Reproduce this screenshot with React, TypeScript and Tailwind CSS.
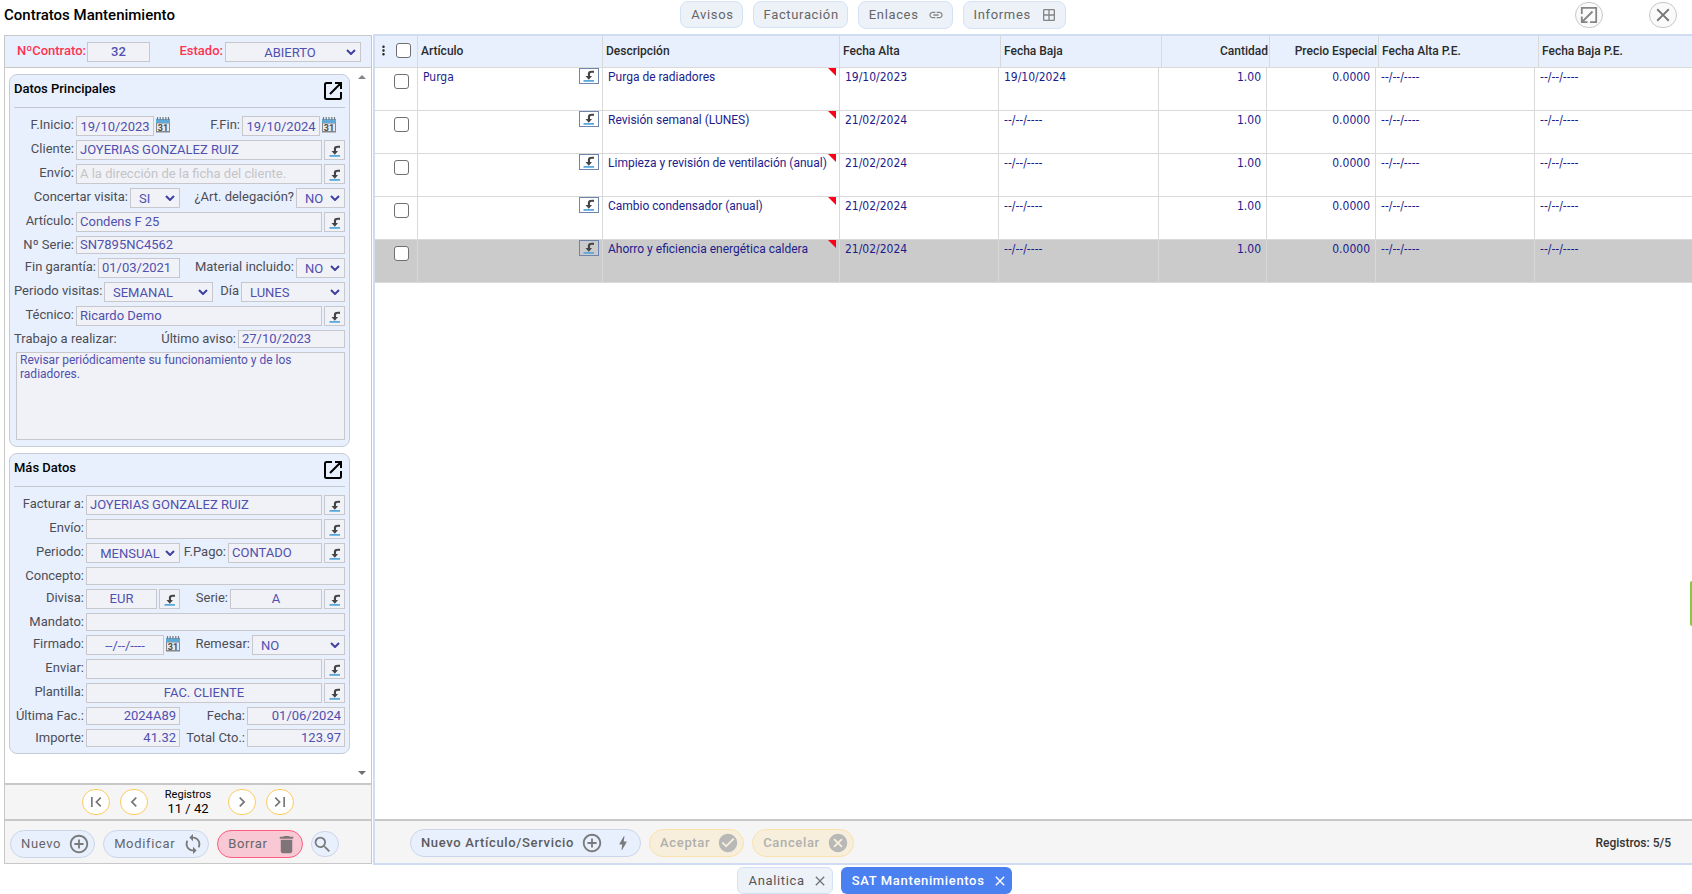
import { useState } from "react";
import type { ReactNode } from "react";
import {
  MdAddCircleOutline,
  MdBolt,
  MdCancel,
  MdCheckCircle,
  MdChevronLeft,
  MdChevronRight,
  MdClose,
  MdDelete,
  MdFirstPage,
  MdLastPage,
  MdLink,
  MdLoop,
  MdMoreVert,
  MdOutlineWindow,
  MdSearch,
} from "react-icons/md";

type Align = "left" | "center" | "right";

const alignClass: Record<Align, string> = {
  left: "text-left",
  center: "text-center",
  right: "text-right",
};

type LabelProps = {
  htmlFor: string;
  children: ReactNode;
  className?: string;
};

const Label = ({ htmlFor, children, className = "ml-auto" }: LabelProps) => (
  <label
    htmlFor={htmlFor}
    className={`${className} shrink-0 whitespace-nowrap text-right leading-[18px] text-[#4d4d55]`}
  >
    {children}
  </label>
);

type FieldProps = {
  id: string;
  value?: string;
  placeholder?: string;
  align?: Align;
  className?: string;
};

const Field = ({
  id,
  value = "",
  placeholder,
  align = "left",
  className = "h-5 flex-1 pb-[2px]",
}: FieldProps) => (
  <input
    id={id}
    type="text"
    defaultValue={value}
    placeholder={placeholder}
    className={`${className} ${alignClass[align]} min-w-0 border border-[#c8c8cc] bg-[#f1f2f7] px-[3px] text-[#5050b0] outline-none placeholder:text-[#c4c4c8]`}
  />
);

type SelectProps = {
  id: string;
  value: string;
  className: string;
  centered?: boolean;
};

const Select = ({ id, value, className, centered = false }: SelectProps) => (
  <span className={`relative flex h-5 shrink-0 ${className}`}>
    <select
      id={id}
      defaultValue={value}
      className={`h-5 w-full appearance-none border border-[#c8c8cc] bg-[#f1f2f7] text-[#5050b0] outline-none ${
        centered ? "pl-2 pr-[14px] [text-align-last:center]" : "pl-2"
      }`}
    >
      <option>{value}</option>
    </select>
    <svg
      viewBox="0 0 10 6"
      className="pointer-events-none absolute right-[5px] top-[7px] h-[6px] w-[10px]"
    >
      <path d="M1 1l4 4 4-4" fill="none" stroke="#4040a0" strokeWidth="2" />
    </svg>
  </span>
);

const LookupIcon = () => (
  <svg viewBox="0 0 12 12" className="h-3 w-3">
    <path d="M0.5 10h10.500v1.800H0.5z" fill="#5aa9dc" />
    <path
      d="M11 .8C7.500.4 5 .9 4.900 3.400V6H2.500L5.800 9.800 9 6H7V4C7.100 3 8.500 2.600 11 2.900z"
      fill="#444"
    />
  </svg>
);

const LookupButton = ({ label }: { label: string }) => (
  <button
    aria-label={label}
    className="flex h-5 w-[21px] shrink-0 items-end justify-center border border-[#c8c8cc] bg-[#f1f2f7] pb-[2px]"
  >
    <LookupIcon />
  </button>
);

const CalendarButton = ({ label }: { label: string }) => (
  <button aria-label={label} className="flex h-5 w-[14px] shrink-0 items-start">
    <svg viewBox="0 0 14 17" className="h-[17px] w-[14px]">
      <path d="M0 4h14v12.500H0z" fill="#85888b" />
      <path d="M0 3h14v4H0z" fill="#5fa9d6" />
      <path d="M1 7.500h12v7.500H1z" fill="#e8e8ea" />
      <path
        d="M1.500 1v3M4.200 1v3M7 1v3M9.800 1v3M12.500 1v3"
        stroke="#75797d"
        strokeWidth="1.200"
      />
      <text x="7" y="14.500" textAnchor="middle" fontSize="9" fontWeight="700" fill="#4c4f52">
        31
      </text>
    </svg>
  </button>
);

const ExpandIcon = () => (
  <svg viewBox="0 0 18 18" className="h-[18px] w-[18px]">
    <path
      d="M8 1H2.500A1.500 1.500 0 0 0 1 2.500v13A1.500 1.500 0 0 0 2.500 17h13a1.500 1.500 0 0 0 1.500-1.500V10M11 1h6v6M17 1L6 12"
      fill="none"
      stroke="#000"
      strokeWidth="2"
    />
  </svg>
);

const ShrinkIcon = () => (
  <svg viewBox="0 0 18 18" className="h-[18px] w-[18px]">
    <path
      d="M1.800 8V1.800h14.400v14.400H10M1.800 10.500v5.700h5.700M2 16L12.500 5.500"
      fill="none"
      stroke="#858585"
      strokeWidth="1.800"
    />
  </svg>
);

const Row = ({ children }: { children: ReactNode }) => (
  <div className="flex items-start gap-[2px]">{children}</div>
);

type CardProps = {
  title: string;
  children: ReactNode;
};

const Card = ({ title, children }: CardProps) => (
  <section className="rounded-lg border border-[#c6cbd6] bg-[#e8f0fe] px-1 pb-[6px]">
    <header className="flex h-[33px] items-start justify-between border-b border-[#c4c8d0] pr-[3px] pt-[7px]">
      <h2 className="text-[13px] font-medium leading-[14px] text-black">{title}</h2>
      <button aria-label={`Ampliar ${title}`}>
        <ExpandIcon />
      </button>
    </header>
    <div className="flex flex-col gap-1 pt-2">{children}</div>
  </section>
);

const MainData = () => (
  <Card title="Datos Principales">
    <Row>
      <Label htmlFor="inicio" className="w-[60px]">F.Inicio:</Label>
      <Field id="inicio" value="19/10/2023" align="center" className="h-5 w-[78px]" />
      <CalendarButton label="Elegir fecha de inicio" />
      <Label htmlFor="fin">F.Fin:</Label>
      <Field id="fin" value="19/10/2024" align="center" className="h-5 w-[78px]" />
      <CalendarButton label="Elegir fecha de fin" />
      <span className="w-[7px]" />
    </Row>
    <Row>
      <Label htmlFor="cliente" className="w-[60px]">Cliente:</Label>
      <Field id="cliente" value="JOYERIAS GONZALEZ RUIZ" />
      <LookupButton label="Buscar cliente" />
    </Row>
    <Row>
      <Label htmlFor="envio" className="w-[60px]">Envío:</Label>
      <Field id="envio" placeholder="A la dirección de la ficha del cliente." />
      <LookupButton label="Buscar envío" />
    </Row>
    <Row>
      <Label htmlFor="concertar" className="w-[114px]">Concertar visita:</Label>
      <Select id="concertar" value="SI" className="w-[50px]" />
      <Label htmlFor="delegacion">¿Art. delegación?</Label>
      <Select id="delegacion" value="NO" className="w-[49px]" />
    </Row>
    <Row>
      <Label htmlFor="articulo" className="w-[60px]">Artículo:</Label>
      <Field id="articulo" value="Condens F 25" />
      <LookupButton label="Buscar artículo" />
    </Row>
    <Row>
      <Label htmlFor="serie" className="w-[60px]">Nº Serie:</Label>
      <Field id="serie" value="SN7895NC4562" className="h-[18px] flex-1" />
    </Row>
    <Row>
      <Label htmlFor="garantia" className="w-[82px]">Fin garantía:</Label>
      <Field id="garantia" value="01/03/2021" className="h-5 w-[82px] pb-[2px]" />
      <Label htmlFor="material">Material incluido:</Label>
      <Select id="material" value="NO" className="w-[49px]" />
    </Row>
    <Row>
      <Label htmlFor="periodo" className="w-[88px]">Periodo visitas:</Label>
      <Select id="periodo" value="SEMANAL" className="w-[109px]" />
      <Label htmlFor="dia">Día</Label>
      <Select id="dia" value="LUNES" className="w-[104px]" />
    </Row>
    <Row>
      <Label htmlFor="tecnico" className="w-[60px]">Técnico:</Label>
      <Field id="tecnico" value="Ricardo Demo" />
      <LookupButton label="Buscar técnico" />
    </Row>
    <Row>
      <Label htmlFor="trabajo" className="">Trabajo a realizar:</Label>
      <Label htmlFor="aviso">Último aviso:</Label>
      <Field id="aviso" value="27/10/2023" className="h-[18px] w-[107px]" />
    </Row>
    <textarea
      id="trabajo"
      defaultValue="Revisar periódicamente su funcionamiento y de los radiadores."
      className="ml-[2px] h-[88px] resize-none border border-[#c8c8cc] bg-[#f1f2f7] px-[3px] text-xs leading-[14px] text-[#5050b0] outline-none"
    />
  </Card>
);

const MoreData = () => (
  <Card title="Más Datos">
    <Row>
      <Label htmlFor="facturar" className="w-[70px]">Facturar a:</Label>
      <Field id="facturar" value="JOYERIAS GONZALEZ RUIZ" />
      <LookupButton label="Buscar cliente a facturar" />
    </Row>
    <Row>
      <Label htmlFor="envioFac" className="w-[70px]">Envío:</Label>
      <Field id="envioFac" />
      <LookupButton label="Buscar envío de factura" />
    </Row>
    <Row>
      <Label htmlFor="periodoFac" className="w-[70px]">Periodo:</Label>
      <Select id="periodoFac" value="MENSUAL" className="w-[94px]" centered />
      <Label htmlFor="pago">F.Pago:</Label>
      <Field id="pago" value="CONTADO" className="h-5 w-[94px] pb-[2px]" />
      <LookupButton label="Buscar forma de pago" />
    </Row>
    <Row>
      <Label htmlFor="concepto" className="w-[70px]">Concepto:</Label>
      <Field id="concepto" className="h-[18px] flex-1" />
    </Row>
    <Row>
      <Label htmlFor="divisa" className="w-[70px]">Divisa:</Label>
      <Field id="divisa" value="EUR" align="center" className="h-5 w-[71px] pb-[2px]" />
      <LookupButton label="Buscar divisa" />
      <Label htmlFor="serieFac">Serie:</Label>
      <Field id="serieFac" value="A" align="center" className="h-5 w-[92px] pb-[2px]" />
      <LookupButton label="Buscar serie" />
    </Row>
    <Row>
      <Label htmlFor="mandato" className="w-[70px]">Mandato:</Label>
      <Field id="mandato" className="h-[18px] flex-1" />
    </Row>
    <Row>
      <Label htmlFor="firmado" className="w-[70px]">Firmado:</Label>
      <Field id="firmado" value="--/--/----" align="center" className="h-5 w-[78px]" />
      <CalendarButton label="Elegir fecha de firma" />
      <Label htmlFor="remesar">Remesar:</Label>
      <Select id="remesar" value="NO" className="w-[93px]" />
    </Row>
    <Row>
      <Label htmlFor="enviar" className="w-[70px]">Enviar:</Label>
      <Field id="enviar" />
      <LookupButton label="Buscar envío de correo" />
    </Row>
    <Row>
      <Label htmlFor="plantilla" className="w-[70px]">Plantilla:</Label>
      <Field id="plantilla" value="FAC. CLIENTE" align="center" />
      <LookupButton label="Buscar plantilla" />
    </Row>
    <Row>
      <Label htmlFor="ultima" className="w-[70px]">Última Fac.:</Label>
      <Field id="ultima" value="2024A89" align="right" className="h-[18px] w-[94px]" />
      <Label htmlFor="fecha">Fecha:</Label>
      <Field id="fecha" value="01/06/2024" align="right" className="h-[18px] w-[98px]" />
    </Row>
    <Row>
      <Label htmlFor="importe" className="w-[70px]">Importe:</Label>
      <Field id="importe" value="41.32" align="right" className="h-[18px] w-[94px]" />
      <Label htmlFor="total">Total Cto.:</Label>
      <Field id="total" value="123.97" align="right" className="h-[18px] w-[98px]" />
    </Row>
  </Card>
);

type PagerButtonProps = {
  label: string;
  children: ReactNode;
};

const PagerButton = ({ label, children }: PagerButtonProps) => (
  <button
    aria-label={label}
    className="flex h-[26px] w-7 items-center justify-center rounded-full border border-[#fccb60] bg-white text-[20px] text-[#757575]"
  >
    {children}
  </button>
);

const pill =
  "flex h-7 items-center gap-[7px] rounded-full border pl-[10px] text-[13px] tracking-wider";

const Sidebar = () => (
  <aside className="flex w-[368px] shrink-0 flex-col border border-[#c8c8c8] text-[13px]">
    <div className="flex h-8 shrink-0 items-start border-b border-[#c8c8c8] bg-[#e8f0fe] pl-3 pr-[10px] pt-[6px]">
      <label htmlFor="contrato" className="font-medium leading-[18px] text-[#ff3350]">
        NºContrato:
      </label>
      <input
        id="contrato"
        defaultValue="32"
        className="ml-px h-5 w-[63px] border border-[#c8c8cc] bg-[#f1f2f7] pb-[2px] text-center font-medium text-[#5050b0] outline-none"
      />
      <label htmlFor="estado" className="ml-auto font-medium leading-[18px] text-[#ff3350]">
        Estado:
      </label>
      <Select id="estado" value="ABIERTO" className="ml-[2px] w-[136px]" centered />
    </div>
    <div className="flex flex-1 pl-1 pt-[6px]">
      <div className="flex w-[341px] flex-col gap-[6px]">
        <MainData />
        <MoreData />
      </div>
      <div className="flex flex-1 flex-col items-center justify-between pb-2 pl-[3px] pt-px">
        <svg viewBox="0 0 8 4" className="h-1 w-2">
          <path d="M0 4l4-4 4 4z" fill="#858585" />
        </svg>
        <svg viewBox="0 0 8 4" className="h-1 w-2">
          <path d="M0 0l4 4 4-4z" fill="#707070" />
        </svg>
      </div>
    </div>
    <nav className="flex h-9 shrink-0 items-center justify-center gap-[10px] border-t-2 border-[#c8c8c8] bg-[#f5f5f5]">
      <PagerButton label="Primero">
        <MdFirstPage />
      </PagerButton>
      <PagerButton label="Anterior">
        <MdChevronLeft />
      </PagerButton>
      <p className="w-[60px] text-center text-[11px] leading-[14px] text-black">
        Registros
        <span className="block text-[13px]">11 / 42</span>
      </p>
      <PagerButton label="Siguiente">
        <MdChevronRight />
      </PagerButton>
      <PagerButton label="Último">
        <MdLastPage />
      </PagerButton>
    </nav>
    <div className="flex h-11 shrink-0 items-center gap-2 border-t-2 border-[#c8c8c8] bg-[#f5f5f5] pl-[5px] pt-1 text-[#666]">
      <button className={`${pill} border-[#ccd6e8] bg-[#e8f0fe] pr-1`}>
        Nuevo
        <MdAddCircleOutline className="text-[22px] text-[#7a7a7a]" />
      </button>
      <button className={`${pill} border-[#ccd6e8] bg-[#e8f0fe] pr-1`}>
        Modificar
        <MdLoop className="text-[22px] text-[#7a7a7a]" />
      </button>
      <button className={`${pill} border-[#ff5c80] bg-[#f8c8d4] pr-1`}>
        Borrar
        <MdDelete className="text-[23px] text-[#7f7478]" />
      </button>
      <button
        aria-label="Buscar"
        className="flex h-[26px] w-7 items-center rounded-full border border-[#ccd6e8] bg-[#e8f0fe] text-[21px] text-[#7a7a7a]"
      >
        <MdSearch />
      </button>
    </div>
  </aside>
);

type Line = {
  articulo: string;
  descripcion: string;
  alta: string;
  baja: string;
};

const noDate = "--/--/----";

const lines: Line[] = [
  { articulo: "Purga", descripcion: "Purga de radiadores", alta: "19/10/2023", baja: "19/10/2024" },
  { articulo: "", descripcion: "Revisión semanal (LUNES)", alta: "21/02/2024", baja: noDate },
  { articulo: "", descripcion: "Limpieza y revisión de ventilación (anual)", alta: "21/02/2024", baja: noDate },
  { articulo: "", descripcion: "Cambio condensador (anual)", alta: "21/02/2024", baja: noDate },
  { articulo: "", descripcion: "Ahorro y eficiencia energética caldera", alta: "21/02/2024", baja: noDate },
];

const headCell = "border-r border-[#d9d9d9] pl-[3px] pr-px pt-[7px] leading-4 font-medium";
const cell =
  "border-r border-[#d9d9d9] px-[5px] pt-px leading-4 font-['DejaVu_Sans_Condensed','Noto_Sans',sans-serif]";
const check =
  "h-[15px] w-[15px] appearance-none rounded-[3px] border border-[#6f6f6f] bg-white checked:bg-[#4a80f0]";

const LinesTable = () => {
  const [selected, setSelected] = useState<number>(4);

  return (
    <table className="block text-xs">
      <thead className="block">
        <tr className="grid h-8 grid-cols-[43px_185px_237px_161px_161px_108px_109px_160px_1fr] border-b border-[#d9d9d9] bg-[#e8f0fe] text-[#2b2b2b]">
          <th className="flex items-start justify-between border-r border-[#d9d9d9] pr-[6px] pt-[7px]">
            <MdMoreVert className="ml-px text-[15px]" />
            <input type="checkbox" aria-label="Seleccionar todo" className={check} />
          </th>
          <th className={`${headCell} text-left`}>Artículo</th>
          <th className={`${headCell} text-left`}>Descripción</th>
          <th className={`${headCell} text-left`}>Fecha Alta</th>
          <th className={`${headCell} text-left`}>Fecha Baja</th>
          <th className={`${headCell} text-right`}>Cantidad</th>
          <th className={`${headCell} text-right`}>Precio Especial</th>
          <th className={`${headCell} text-left`}>Fecha Alta P.E.</th>
          <th className={`${headCell} border-r-0 text-left`}>Fecha Baja P.E.</th>
        </tr>
      </thead>
      <tbody className="block">
        {lines.map((line, i) => (
          <tr
            key={i}
            onClick={() => setSelected(i)}
            className={`grid h-[43px] grid-cols-[43px_185px_237px_159px_160px_108px_109px_159px_1fr] border-b border-[#d9d9d9] text-[#1c1c8c] ${
              selected === i ? "bg-[#cbcbcb]" : "bg-white"
            }`}
          >
            <td className="border-r border-[#d9d9d9] pl-[19px] pt-[6px]">
              <input
                type="checkbox"
                aria-label={`Seleccionar ${line.descripcion}`}
                className={check}
              />
            </td>
            <td className="flex items-start justify-between border-r border-[#d9d9d9] pl-[5px] pr-[3px] font-['DejaVu_Sans_Condensed','Noto_Sans',sans-serif]">
              <span className="pt-px leading-4">{line.articulo}</span>
              <button
                aria-label="Buscar artículo"
                className="flex h-4 w-5 items-center justify-center border border-[#6d84ad]"
              >
                <LookupIcon />
              </button>
            </td>
            <td className="flex items-start justify-between border-r border-[#d9d9d9] pl-[5px] pr-[3px]">
              <span className="pt-px leading-4">{line.descripcion}</span>
              <svg viewBox="0 0 8 8" className="h-2 w-2">
                <path d="M0 0h8v8z" fill="#ff0018" />
              </svg>
            </td>
            <td className={cell}>{line.alta}</td>
            <td className={cell}>{line.baja}</td>
            <td className={`${cell} text-right`}>1.00</td>
            <td className={`${cell} text-right`}>0.0000</td>
            <td className={cell}>{noDate}</td>
            <td className={`${cell} border-r-0`}>{noDate}</td>
          </tr>
        ))}
      </tbody>
    </table>
  );
};

const topButton =
  "flex items-center rounded-lg border border-[#d3e2f5] bg-[#edf2f9] pl-[10px] text-[13px] tracking-wider text-[#666]";

const TopBar = () => (
  <header className="grid h-[34px] shrink-0 grid-cols-[1fr_auto_1fr] items-start pl-1 pt-px">
    <h1 className="pt-[2px] text-[15px] font-medium leading-6 text-black">
      Contratos Mantenimiento
    </h1>
    <div className="flex items-start gap-[10px] pl-[50px]">
      <button className={`${topButton} h-[27px] pr-2`}>Avisos</button>
      <button className={`${topButton} h-[27px] pr-2`}>Facturación</button>
      <button className={`${topButton} h-7 gap-[9px] pr-2`}>
        Enlaces
        <MdLink className="text-base text-[#858585]" />
      </button>
      <button className={`${topButton} h-7 gap-[10px] pr-2`}>
        Informes
        <MdOutlineWindow className="text-base text-[#858585]" />
      </button>
    </div>
    <div className="flex justify-end gap-[46px] pr-[15px] pt-px">
      <button
        aria-label="Restaurar"
        className="flex h-[26px] w-7 items-center justify-center rounded-full border border-[#c8c8c8] bg-[#fafafa]"
      >
        <ShrinkIcon />
      </button>
      <button
        aria-label="Cerrar"
        className="flex h-[26px] w-7 items-center justify-center rounded-full border border-[#c8c8c8] bg-[#fafafa] text-[22px] text-[#757575]"
      >
        <MdClose />
      </button>
    </div>
  </header>
);

const LinesPanel = () => (
  <main className="flex min-w-0 flex-1 flex-col border-y-2 border-l-2 border-[#cfdcf2]">
    <div className="flex-1">
      <LinesTable />
    </div>
    <footer className="flex h-11 shrink-0 items-center gap-2 border-t-2 border-[#c8c8c8] bg-[#f5f5f5] pl-[35px] pr-[21px] pt-[2px]">
      <button
        className={`${pill} border-[#ccd6e8] bg-[#e8f0fe] pr-2 font-medium text-[#5c5c5c]`}
      >
        Nuevo Artículo/Servicio
        <MdAddCircleOutline className="text-[22px] text-[#7a7a7a]" />
        <MdBolt className="ml-1 text-[18px] text-[#7a7a7a]" />
      </button>
      <button
        disabled
        className={`${pill} border-[#fbe2ab] bg-[#f7efdc] pr-1 font-medium text-[#b0b0ae]`}
      >
        Aceptar
        <MdCheckCircle className="text-[22px] text-[#b8b8b6]" />
      </button>
      <button
        disabled
        className={`${pill} border-[#fbe2ab] bg-[#f7efdc] pr-1 font-medium text-[#b0b0ae]`}
      >
        Cancelar
        <MdCancel className="text-[22px] text-[#b8b8b6]" />
      </button>
      <p className="ml-auto text-xs font-medium text-[#333]">Registros: 5/5</p>
    </footer>
  </main>
);

const tab =
  "flex h-[27px] items-center gap-[7px] rounded-md pl-[11px] pr-1 text-[13px] tracking-wider";

const BottomTabs = () => (
  <nav className="flex h-[29px] shrink-0 items-end justify-center gap-2 pl-14">
    <button className={`${tab} border border-[#d3e2f5] bg-[#edf2f9] text-[#555]`}>
      Analitica
      <MdClose className="text-base text-[#757575]" />
    </button>
    <button className={`${tab} bg-[#4a80f0] font-medium text-white`}>
      SAT Mantenimientos
      <MdClose className="text-base" />
    </button>
  </nav>
);

const App = () => (
  <div className="relative flex min-h-screen flex-col bg-white font-[Roboto,sans-serif]">
    <TopBar />
    <div className="flex flex-1 gap-px pl-1">
      <div className="flex pb-px pt-px">
        <Sidebar />
      </div>
      <LinesPanel />
    </div>
    <BottomTabs />
    <div className="absolute right-0 top-[65%] h-[45px] w-[2px] rounded-l bg-[#8bc83f]" />
  </div>
);

export default App;
